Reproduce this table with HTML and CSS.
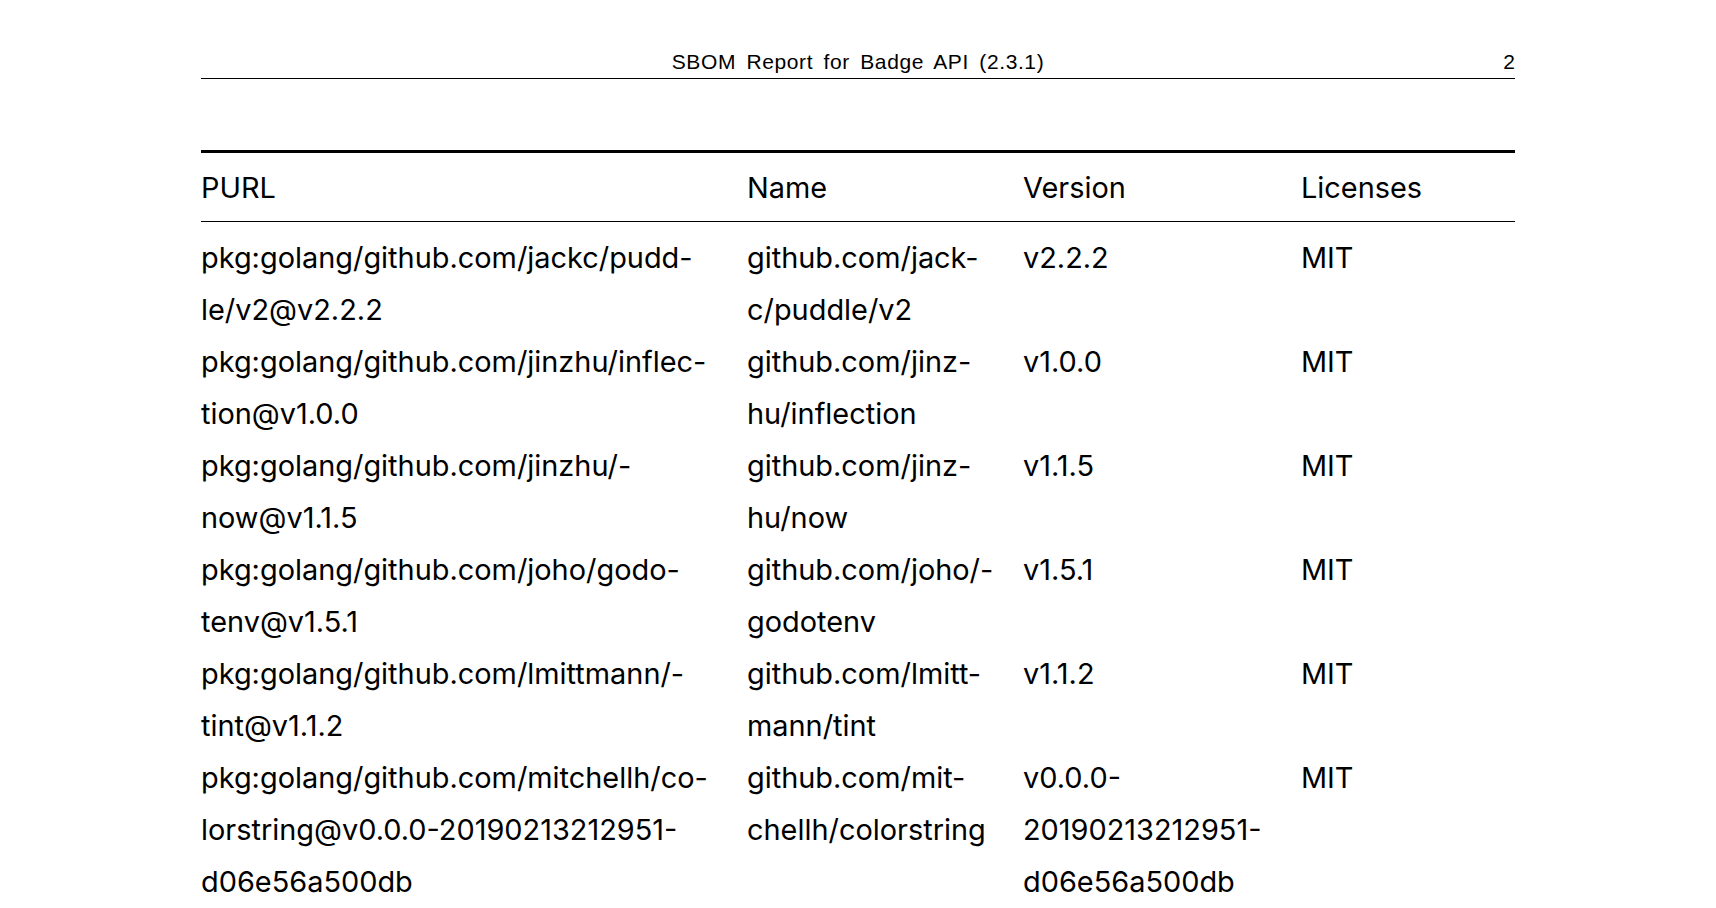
FILE: index.html
```html
<!DOCTYPE html>
<html>
<head>
<meta charset="utf-8">
<link rel="stylesheet" href="styles.css">
</head>
<body>
<div class="page">
  <header class="running-head">
    <span></span>
    <span class="title">SBOM Report for Badge API (2.3.1)</span>
    <span class="pageno">2</span>
  </header>
  <table class="sbom">
    <colgroup>
      <col class="c-purl"><col class="c-name"><col class="c-ver"><col class="c-lic">
    </colgroup>
    <thead>
      <tr><th>PURL</th><th>Name</th><th>Version</th><th>Licenses</th></tr>
    </thead>
    <tbody>
      <tr class="first">
        <td>pkg:golang/github.com/jackc/pudd-<br>le/v2@v2.2.2</td>
        <td>github.com/jack-<br>c/puddle/v2</td>
        <td>v2.2.2</td>
        <td>MIT</td>
      </tr>
      <tr>
        <td>pkg:golang/github.com/jinzhu/inflec-<br>tion@v1.0.0</td>
        <td>github.com/jinz-<br>hu/inflection</td>
        <td>v1.0.0</td>
        <td>MIT</td>
      </tr>
      <tr>
        <td>pkg:golang/github.com/jinzhu/-<br>now@v1.1.5</td>
        <td>github.com/jinz-<br>hu/now</td>
        <td>v1.1.5</td>
        <td>MIT</td>
      </tr>
      <tr>
        <td>pkg:golang/github.com/joho/godo-<br>tenv@v1.5.1</td>
        <td>github.com/joho/-<br>godotenv</td>
        <td>v1.5.1</td>
        <td>MIT</td>
      </tr>
      <tr>
        <td>pkg:golang/github.com/lmittmann/-<br>tint@v1.1.2</td>
        <td>github.com/lmitt-<br>mann/tint</td>
        <td>v1.1.2</td>
        <td>MIT</td>
      </tr>
      <tr>
        <td>pkg:golang/github.com/mitchellh/co-<br>lorstring@v0.0.0-20190213212951-<br>d06e56a500db</td>
        <td>github.com/mit-<br>chellh/colorstring</td>
        <td>v0.0.0-<br>20190213212951-<br>d06e56a500db</td>
        <td>MIT</td>
      </tr>
    </tbody>
  </table>
</div>
</body>
</html>
```
FILE: styles.css
```css
html, body {
  margin: 0;
  padding: 0;
  background: #fff;
  color: #000;
}
body {
  overflow: hidden;
}
.page {
  width: 1314px;
  margin-left: 201px;
}
.running-head {
  display: grid;
  grid-template-columns: 1fr auto 1fr;
  align-items: end;
  padding-top: 50px;
  padding-bottom: 4px;
  border-bottom: 1px solid #000;
  font-family: "Liberation Sans", Arial, sans-serif;
  font-size: 21px;
  line-height: 24px;
}
.running-head .title {
  letter-spacing: 0.6px;
  word-spacing: 4px;
}
.running-head .pageno {
  text-align: right;
}
.sbom {
  margin-top: 71px;
  width: 1314px;
  border-collapse: collapse;
  table-layout: fixed;
  font-family: Inter, "Noto Sans", sans-serif;
  font-size: 28.9px;
  line-height: 52px;
  border-top: 3px solid #000;
}
.c-purl { width: 546px; }
.c-name { width: 276px; }
.c-ver { width: 278px; }
.c-lic { width: 214px; }
.sbom th {
  text-align: left;
  font-weight: normal;
  padding: 9px 0 7px 0;
  border-bottom: 1px solid #000;
  vertical-align: top;
}
.sbom td {
  padding: 0;
  vertical-align: top;
  white-space: nowrap;
}
.sbom tr.first td {
  padding-top: 10px;
}
```
